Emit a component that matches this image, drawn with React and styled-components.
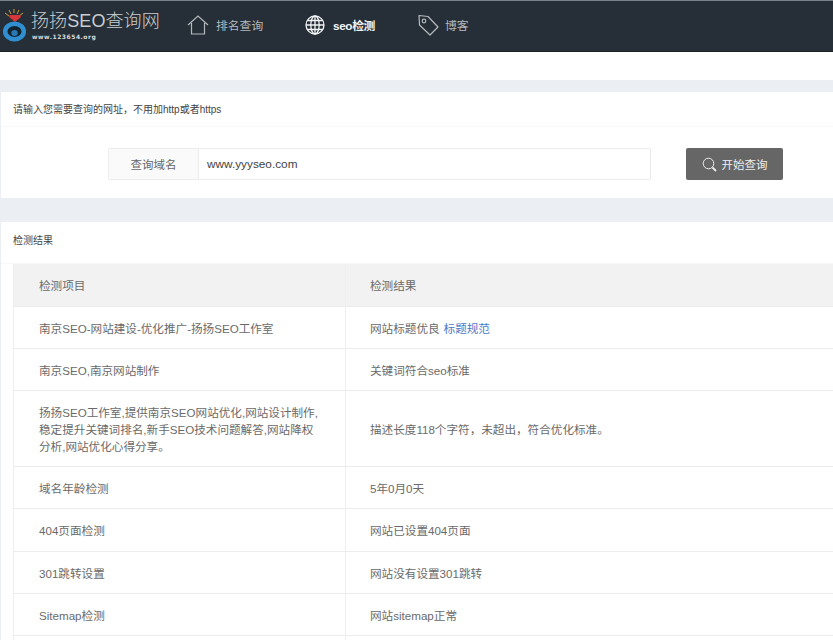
import React from 'react';
import styled, { createGlobalStyle } from 'styled-components';

const GlobalStyle = createGlobalStyle`
    html, body {
        margin: 0;
        padding: 0;
        height: 640px;
        overflow: hidden;
        background: #ebeef3;
    }
    * {
        box-sizing: border-box;
    }
    body {
        font-family: "Liberation Sans", "Noto Sans CJK SC", sans-serif;
    }
`;

const Page = styled.div`
    width: 833px;
    height: 640px;
    overflow: hidden;
`;

const Header = styled.div`
    height: 52px;
    background: #262f37;
    border-top: 1px solid #77838a;
    border-bottom: 1px solid #1b2227;
    display: flex;
    align-items: center;
`;

const Logo = styled.div`
    width: 187px;
    height: 50px;
    display: flex;
    align-items: flex-start;
    padding-left: 2px;
`;

const LogoText = styled.div`
    margin-left: 3px;
    padding-top: 10px;
    display: flex;
    flex-direction: column;
`;

const LogoTitle = styled.div`
    color: #c8cdd0;
    font-size: 18px;
    line-height: 20px;
    white-space: nowrap;
    font-weight: 300;
    letter-spacing: 0.1px;
`;

const LogoUrl = styled.div`
    color: #d8dcdf;
    font-family: "DejaVu Sans", sans-serif;
    font-size: 6px;
    font-weight: 700;
    line-height: 9px;
    margin-top: 1px;
    margin-left: 1px;
    letter-spacing: 0.5px;
`;

const Nav = styled.div`
    display: flex;
    align-items: center;
    margin-bottom: 2px;
`;

const NavItem = styled.div`
    display: flex;
    align-items: center;
    gap: ${props => props.$gap}px;
    width: ${props => props.$width}px;
    color: ${props => (props.$active ? '#f2f4f5' : '#b4b9bc')};
    font-size: 11.8px;
    font-weight: ${props => (props.$active ? 700 : 400)};
    letter-spacing: ${props => (props.$active ? '-0.4px' : '0')};
`;

const NavLabel = styled.span`
    padding-bottom: 2px;
`;

const WhiteStrip = styled.div`
    height: 28px;
    background: #ffffff;
`;

const Card = styled.div`
    background: #ffffff;
    margin-left: 1px;
`;

const CardTitle = styled.div`
    height: ${props => props.$height}px;
    padding-left: 12px;
    padding-bottom: ${props => props.$shift}px;
    display: flex;
    align-items: center;
    color: #444444;
    font-size: 10px;
    border-bottom: 1px solid #f8f8f8;
`;

const SearchCard = styled(Card)`
    margin-top: 12px;
    margin-bottom: 24px;
`;

const SearchRow = styled.div`
    height: 71px;
    display: flex;
    align-items: flex-start;
    padding-top: 21px;
    padding-left: 107px;
`;

const InputGroup = styled.div`
    width: 543px;
    height: 32px;
    display: flex;
    border: 1px solid #ececec;
    border-radius: 2px;
`;

const InputLabel = styled.div`
    width: 90px;
    background: #fafafa;
    border-right: 1px solid #ececec;
    color: #666666;
    font-size: 11.5px;
    display: flex;
    align-items: center;
    justify-content: center;
`;

const DomainInput = styled.div`
    flex: 1;
    padding-left: 8px;
    color: #444444;
    font-size: 11.8px;
    display: flex;
    align-items: center;
`;

const SearchButton = styled.div`
    margin-left: 35px;
    width: 97px;
    height: 32px;
    background: #666666;
    border-radius: 2px;
    color: #eeeeee;
    font-size: 11.5px;
    display: flex;
    align-items: center;
    justify-content: center;
    gap: 5px;
`;

const ResultBody = styled.div`
    padding-left: 12px;
`;

const Table = styled.div`
    width: 900px;
    border-left: 1px solid #eeeeee;
`;

const Row = styled.div`
    display: grid;
    grid-template-columns: 331px 1fr;
    height: ${props => props.$height}px;
    background: ${props => (props.$head ? '#f2f2f2' : '#ffffff')};
    border-bottom: 1px solid #ececec;
`;

const Cell = styled.div`
    padding: 1px 25px 0;
    display: flex;
    align-items: center;
    color: #6a6a6a;
    font-size: 11.6px;
    line-height: 17px;
    & + & {
        padding-left: 24px;
        border-left: 1px solid #eeeeee;
    }
`;

const Link = styled.a`
    color: #4a78c8;
    margin-left: 4px;
`;

const rows = [
    { height: 42, name: '南京SEO-网站建设-优化推广-扬扬SEO工作室', result: '网站标题优良', link: '标题规范' },
    { height: 42, name: '南京SEO,南京网站制作', result: '关键词符合seo标准' },
    { height: 76, name: '扬扬SEO工作室,提供南京SEO网站优化,网站设计制作,稳定提升关键词排名,新手SEO技术问题解答,网站降权分析,网站优化心得分享。', result: '描述长度118个字符，未超出，符合优化标准。' },
    { height: 42, name: '域名年龄检测', result: '5年0月0天' },
    { height: 43, name: '404页面检测', result: '网站已设置404页面' },
    { height: 42, name: '301跳转设置', result: '网站没有设置301跳转' },
    { height: 42, name: 'Sitemap检测', result: '网站sitemap正常' },
];

const LogoIcon = () => (
    <svg width="26" height="42" viewBox="0 0 26 42">
        <path d="M12 8V12M7 9L9 13M17 9L15 13M3 12L7 15M21 12L17 15" stroke="#d9a03a" strokeWidth="1" />
        <path d="M8 14H18L19 16L13 21L7 16Z" fill="#d9363a" />
        <ellipse cx="12.5" cy="30.5" rx="9.3" ry="7.7" fill="#14242f" stroke="#2f8fd0" strokeWidth="4.5" />
        <ellipse cx="12.5" cy="32" rx="3.2" ry="3" fill="#2878b4" />
    </svg>
);

const HomeIcon = () => (
    <svg width="22" height="20" viewBox="0 0 22 20" fill="none" stroke="#b4b9bc" strokeWidth="1.2">
        <path d="M1 10L11 1L21 10" />
        <path d="M4.5 8V19H17.5V8" />
    </svg>
);

const GlobeIcon = () => (
    <svg width="20" height="20" viewBox="0 0 20 20" fill="none" stroke="#f2f4f5" strokeWidth="1.3">
        <circle cx="10" cy="10" r="9" />
        <ellipse cx="10" cy="10" rx="4.2" ry="9" />
        <path d="M10 1V19M1 10H19M2.5 5.5H17.5M2.5 14.5H17.5" />
    </svg>
);

const TagIcon = () => (
    <svg width="22" height="22" viewBox="0 0 22 22" fill="none" stroke="#b4b9bc" strokeWidth="1.2">
        <path d="M2 1.5L11 2.5L21 13L13 21L2.5 11Z" strokeLinejoin="round" />
        <circle cx="7" cy="7" r="1.8" />
    </svg>
);

const SearchIcon = () => (
    <svg width="15" height="15" viewBox="0 0 15 15" fill="none" stroke="#eeeeee">
        <circle cx="6.5" cy="6.5" r="5.3" strokeWidth="1" />
        <path d="M10.5 10.5L14 14" strokeWidth="1.8" />
    </svg>
);

const App = () => {
    return (
        <Page>
            <GlobalStyle />
            <Header>
                <Logo>
                    <LogoIcon />
                    <LogoText>
                        <LogoTitle>扬扬SEO查询网</LogoTitle>
                        <LogoUrl>www.123654.org</LogoUrl>
                    </LogoText>
                </Logo>
                <Nav>
                    <NavItem $gap={7} $width={118}><HomeIcon /><NavLabel>排名查询</NavLabel></NavItem>
                    <NavItem $gap={8} $width={112} $active><GlobeIcon /><NavLabel>seo检测</NavLabel></NavItem>
                    <NavItem $gap={6}><TagIcon /><NavLabel>博客</NavLabel></NavItem>
                </Nav>
            </Header>
            <WhiteStrip />
            <SearchCard>
                <CardTitle $height={35} $shift={2}>请输入您需要查询的网址，不用加http或者https</CardTitle>
                <SearchRow>
                    <InputGroup>
                        <InputLabel>查询域名</InputLabel>
                        <DomainInput>www.yyyseo.com</DomainInput>
                    </InputGroup>
                    <SearchButton><SearchIcon />开始查询</SearchButton>
                </SearchRow>
            </SearchCard>
            <Card>
                <CardTitle $height={42} $shift={6}>检测结果</CardTitle>
                <ResultBody>
                    <Table>
                        <Row $head $height={43}>
                            <Cell>检测项目</Cell>
                            <Cell>检测结果</Cell>
                        </Row>
                        {rows.map(row => (
                            <Row key={row.name} $height={row.height}>
                                <Cell>{row.name}</Cell>
                                <Cell>
                                    {row.result}
                                    {row.link && <Link>{row.link}</Link>}
                                </Cell>
                            </Row>
                        ))}
                        <Row $height={42}>
                            <Cell />
                            <Cell />
                        </Row>
                    </Table>
                </ResultBody>
            </Card>
        </Page>
    );
};

export default App;
